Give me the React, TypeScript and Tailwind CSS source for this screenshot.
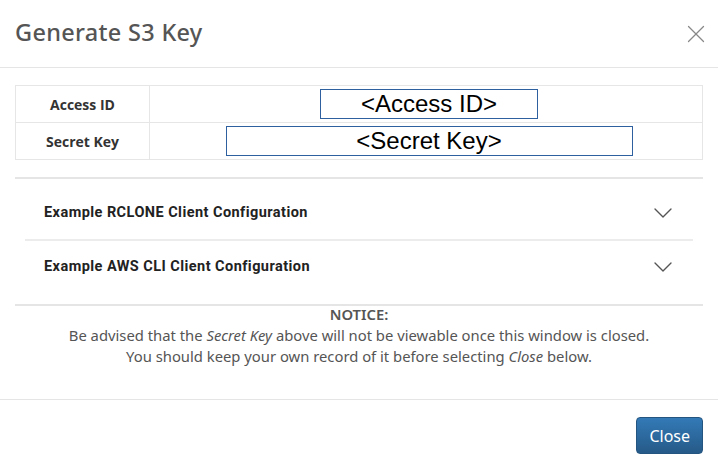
import { ChevronDown, X } from "lucide-react";

const ROWS = [
  { label: "Access ID", value: "<Access ID>", width: "w-[218px]" },
  { label: "Secret Key", value: "<Secret Key>", width: "w-[407px]" },
];

const SECTIONS = [
  { title: "Example RCLONE Client Configuration", pad: "h-[62px] pt-[8px] border-b-2 border-[#ececec]" },
  { title: "Example AWS CLI Client Configuration", pad: "h-[64px] pb-[12px]" },
];

export default function App() {
  return (
    <div className="w-[718px] h-[471px] bg-white flex flex-col font-['Open_Sans',sans-serif]">
      {/* Header */}
      <div className="h-[68px] border-b border-[#e5e5e5] flex items-center justify-between pl-[15px] pr-[7px]">
        <h4 className="text-[23.5px] font-medium text-[#555] tracking-[0.3px] font-['Noto_Sans',sans-serif] pb-[2px]">
          Generate S3 Key
        </h4>
        <X className="w-[30px] h-[30px] text-[#888]" strokeWidth={1} />
      </div>

      {/* Body */}
      <div className="px-[15px] pt-[17px]">
        <table className="w-full border-collapse border border-[#e6e6e6]">
          <tbody>
            {ROWS.map((r) => (
              <tr key={r.label} className="h-[37px]">
                <td className="w-[134px] border border-[#e6e6e6] text-center text-[14px] font-bold text-[#333]">
                  {r.label}
                </td>
                <td className="border border-[#e6e6e6] text-center pl-[6px]">
                  <div
                    className={`${r.width} h-[30px] mx-auto border border-[#2e5f9e] flex items-center justify-center text-[24px] leading-none text-black font-['Liberation_Sans',sans-serif]`}
                  >
                    {r.value}
                  </div>
                </td>
              </tr>
            ))}
          </tbody>
        </table>

        <div className="mt-[17px] border-t-2 border-[#e5e5e5]">
          {SECTIONS.map((s) => (
            <div
              key={s.title}
              className={`mx-[10px] flex items-center justify-between pl-[19px] pr-[14px] ${s.pad}`}
            >
              <span className="text-[14.5px] font-bold text-[#222] tracking-[0.45px] font-['Roboto',sans-serif]">
                {s.title}
              </span>
              <ChevronDown className="w-[32px] h-[32px] text-[#555]" strokeWidth={1} />
            </div>
          ))}
        </div>

        <div className="border-t-2 border-[#e5e5e5] text-center text-[14.8px] leading-[21px] text-[#555] font-['Noto_Sans',sans-serif] -mt-[1px]">
          <p className="font-semibold -mt-[2px]">NOTICE:</p>
          <p>
            Be advised that the <em>Secret Key</em> above will not be viewable once this window is closed.
          </p>
          <p>
            You should keep your own record of it before selecting <em>Close</em> below.
          </p>
        </div>
      </div>

      {/* Footer */}
      <div className="mt-auto h-[72px] border-t border-[#e5e5e5] flex items-center justify-end pr-[15px]">
        <button className="h-[37px] px-[12px] rounded-[4px] border border-[#245580] bg-gradient-to-b from-[#337ab7] to-[#265a88] text-white text-[16px] font-['Noto_Sans',sans-serif]">
          Close
        </button>
      </div>
    </div>
  );
}
